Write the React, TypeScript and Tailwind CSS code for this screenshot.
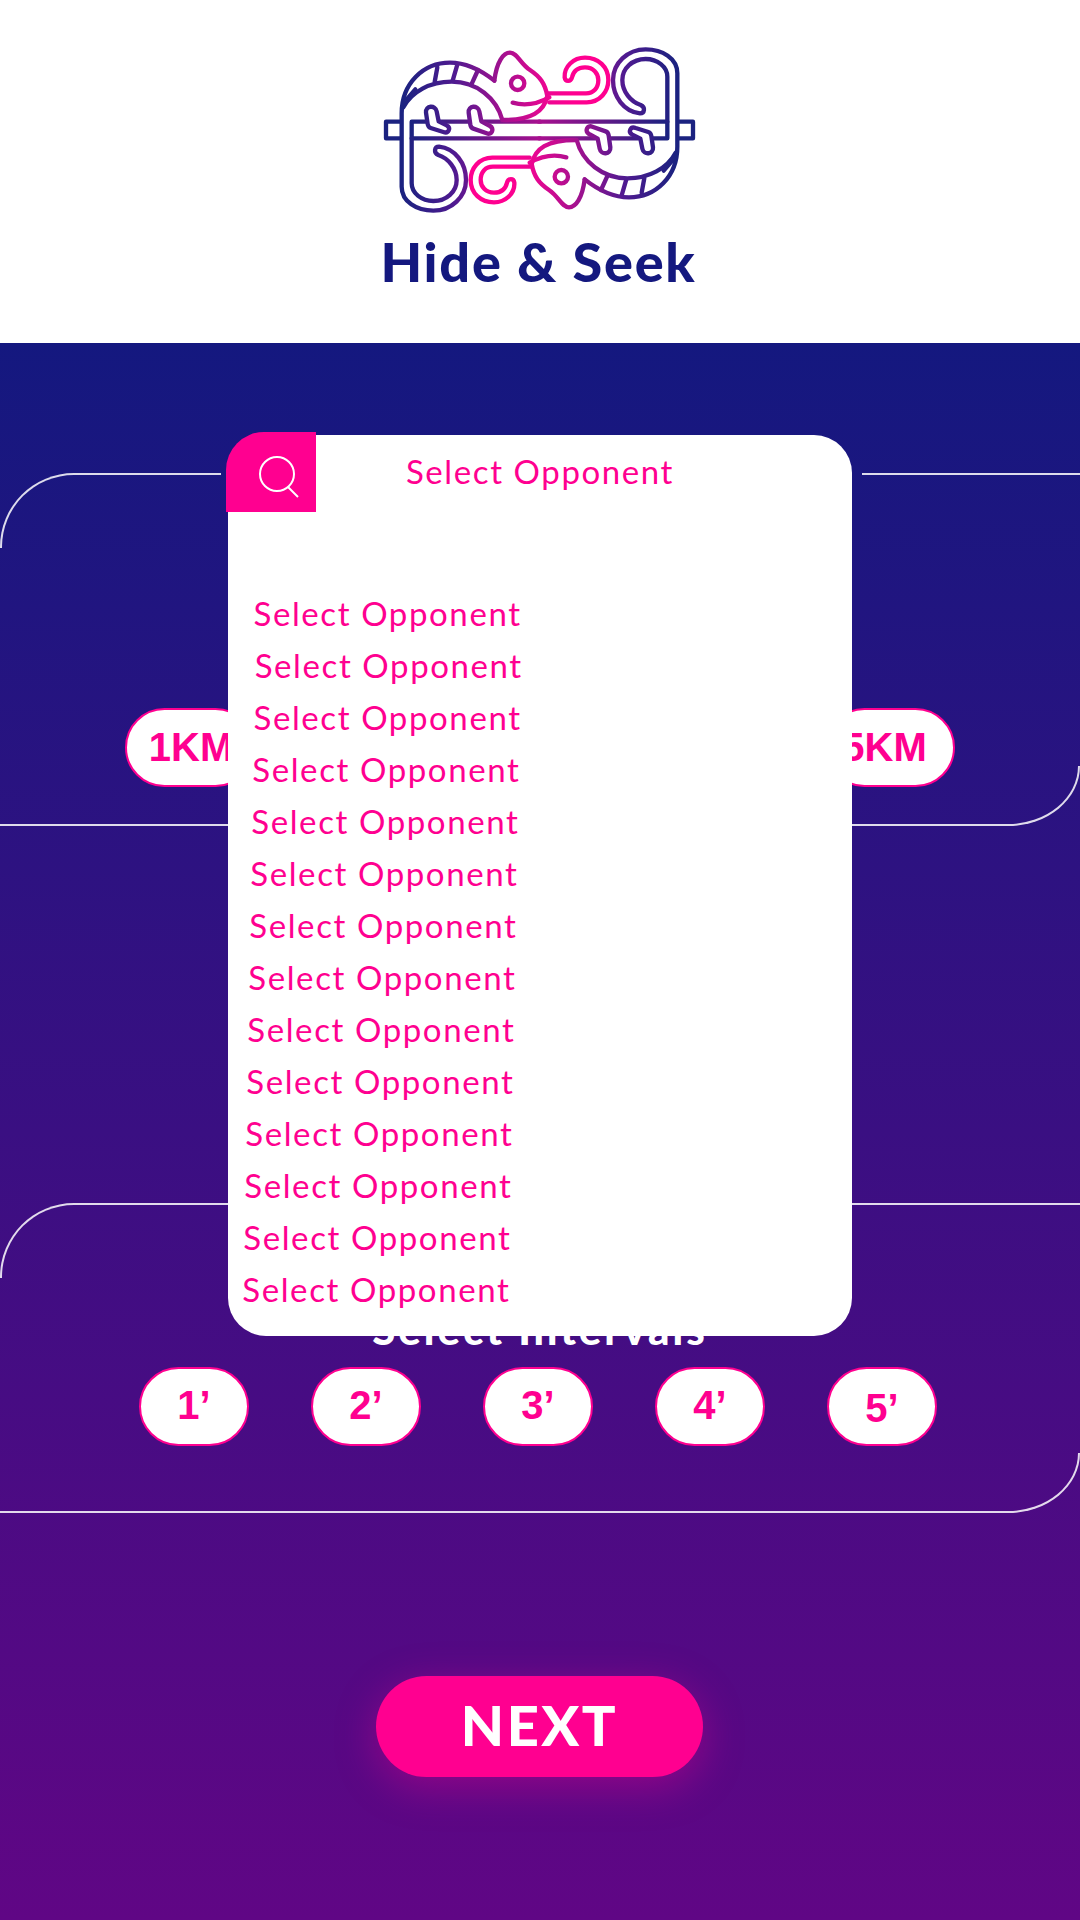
const rowOffsets = [
  "ml-[25.5px]",
  "ml-[26.7px]",
  "ml-[25.5px]",
  "ml-[24.3px]",
  "ml-[23.3px]",
  "ml-[22.3px]",
  "ml-[21.3px]",
  "ml-[20.3px]",
  "ml-[19.3px]",
  "ml-[18.3px]",
  "ml-[17.3px]",
  "ml-[16.3px]",
  "ml-[15.3px]",
  "ml-[14.3px]",
];

const Chameleon = ({ transform }: { transform?: string }) => (
  <g
    transform={transform}
    fill="none"
    stroke="url(#bodyGrad)"
    strokeWidth="13"
    strokeLinecap="round"
    strokeLinejoin="round"
  >
    {/* bar */}
    <path stroke="url(#barGrad)" d="M180 305 H138 V355 H180 M215 355 V305 H600 M215 355 H600" />
    {/* body and tail */}
    <path d="M463 182 C420 148 380 128 330 128 C250 128 185 190 185 280 V500 C185 545 230 572 280 572 C335 572 378 530 378 480 C378 430 345 385 297 380 C283 380 280 398 295 405 C325 415 350 445 350 480 C350 515 320 543 280 543 C245 543 215 520 215 490 V355" />
    <path d="M190 262 C215 215 270 185 335 185 C410 185 470 235 487 300" />
    <path d="M200 238 L226 208 M292 142 L284 186 M352 134 L338 182 M414 150 L394 194" />
    {/* head */}
    <path d="M463 182 C470 125 490 98 510 98 C532 98 540 130 570 150 C600 170 615 190 622 228 C612 275 575 300 490 300" />
    <path d="M518 248 C552 258 592 252 628 232" />
    <circle cx="533" cy="190" r="20" />
    {/* tongue */}
    <path d="M628 247 H740 C780 247 805 215 805 180 C805 140 775 113 735 113 C700 113 672 140 674 172 C676 186 692 186 696 172 C700 155 712 142 735 142 C760 142 775 160 775 180 C775 205 760 220 738 220 H622" />
    {/* legs */}
    <path fill="#fff" d="M258 278 C256 256 286 254 290 274 L296 304 L320 316 C334 324 326 342 310 336 L272 324 C266 322 264 318 263 312 Z" />
    <path fill="#fff" d="M386 278 C384 256 414 254 418 274 L424 304 L450 318 C464 326 456 346 440 340 L400 326 C394 324 392 320 391 314 Z" />
  </g>
);

const Logo = () => (
  <svg viewBox="0 0 1200 660" className="w-[400px] h-[220px] shrink-0">
    <defs>
      <linearGradient id="bodyGrad" gradientUnits="userSpaceOnUse" x1="190" y1="0" x2="700" y2="0">
        <stop offset="0" stopColor="#1b2280" />
        <stop offset="0.3" stopColor="#4f1a90" />
        <stop offset="0.6" stopColor="#a8108f" />
        <stop offset="0.85" stopColor="#ee0592" />
        <stop offset="1" stopColor="#ff0090" />
      </linearGradient>
      <linearGradient id="barGrad" gradientUnits="userSpaceOnUse" x1="215" y1="0" x2="600" y2="0">
        <stop offset="0" stopColor="#1b2280" />
        <stop offset="1" stopColor="#a8108f" />
      </linearGradient>
    </defs>
    <Chameleon />
    <Chameleon transform="rotate(180 598.5 330)" />
  </svg>
);

const Pill = ({ label, className }: { label: string; className: string }) => (
  <div
    className={`flex h-[79px] items-center justify-center rounded-full border-2 border-[#ff0090] bg-white font-['Liberation_Sans',sans-serif] text-[40px] font-bold text-[#ff0090] ${className}`}
  >
    {label}
  </div>
);

const TopEdge = ({ gap }: { gap?: boolean }) => (
  <div className="flex h-[75px] shrink-0">
    <div className="h-[75px] w-[74px] rounded-tl-[74px] border-l-2 border-t-2 border-white/85" />
    <div className="w-[147px] border-t-2 border-white/85" />
    <div className={`w-[641px] ${gap ? "" : "border-t-2 border-white/85"}`} />
    <div className="flex-1 border-t-2 border-white/85" />
  </div>
);

const BottomEdge = () => (
  <div className="flex h-[60px] shrink-0">
    <div className="flex-1 border-b-2 border-white/85" />
    <div className="h-[60px] w-[72px] rounded-br-[72px_60px] border-b-2 border-r-2 border-white/85" />
  </div>
);

export default function App() {
  return (
    <div className="flex h-[1920px] w-[1080px] flex-col overflow-hidden bg-white">
      <header className="flex h-[343px] shrink-0 flex-col items-center pt-[20px]">
        <Logo />
        <h1 className="-mt-[8px] mr-[3px] font-['Lato',sans-serif] text-[54px] leading-[60px] font-black tracking-[1.7px] text-[#14187f]">
          Hide &amp; Seek
        </h1>
      </header>

      <main className="relative flex flex-1 flex-col bg-linear-to-b/srgb from-[#14187f] to-[#600685] pt-[130px]">
        <section className="flex h-[353px] flex-col">
          <TopEdge gap />
          <div className="mt-[160px] flex justify-between px-[125px]">
            <Pill label="1KM" className="w-[130px] pb-[2px] pl-[2px]" />
            <Pill label="5KM" className="w-[130px] pb-[2px] pr-[11px]" />
          </div>
          <div className="-mt-[21px]">
            <BottomEdge />
          </div>
        </section>

        <section className="mt-[377px] flex h-[310px] flex-col">
          <TopEdge />
          <p className="mt-[26px] text-center font-['Lato',sans-serif] text-[42px] leading-[50px] font-black tracking-[3px] text-white">
            Select Intervals
          </p>
          <div className="mt-[13px] flex justify-between pl-[139px] pr-[143px]">
            <Pill label="1’" className="w-[110px] pb-[4px]" />
            <Pill label="2’" className="w-[110px] pb-[4px]" />
            <Pill label="3’" className="w-[110px] pb-[4px]" />
            <Pill label="4’" className="w-[110px] pb-[4px]" />
            <Pill label="5’" className="w-[110px] pt-[2px]" />
          </div>
          <div className="mt-auto">
            <BottomEdge />
          </div>
        </section>

        <button className="ml-[376px] mt-[163px] flex h-[101px] w-[327px] items-center justify-center rounded-full bg-[#ff0090] pb-[3px] font-['Lato',sans-serif] text-[56px] font-black tracking-[2.5px] text-white shadow-[0_10px_40px_rgba(255,0,144,0.35)]">
          NEXT
        </button>

        {/* opponent dropdown, sits on top of the form */}
        <div className="absolute left-[228px] top-[92px] h-[901px] w-[624px] rounded-[38px] bg-white font-['Lato',sans-serif] text-[33px] tracking-[1.6px] text-[#ff0090]">
          <div className="absolute -left-[2px] -top-[3px] flex h-[80px] w-[90px] items-center justify-center rounded-tl-[38px] bg-[#ff0090] pl-[16px] pt-[8px]">
            <svg viewBox="0 0 44 44" className="h-[44px] w-[44px]" fill="none" stroke="#fff" strokeWidth="2">
              <circle cx="20" cy="20" r="17" />
              <path d="M31 33 L41 43" />
            </svg>
          </div>
          <div className="flex h-[73px] items-center justify-center">Select Opponent</div>
          <ul className="mt-[80px]">
            {rowOffsets.map((offset, i) => (
              <li key={i} className={`flex h-[52px] items-center ${offset}`}>
                Select Opponent
              </li>
            ))}
          </ul>
        </div>
      </main>
    </div>
  );
}
